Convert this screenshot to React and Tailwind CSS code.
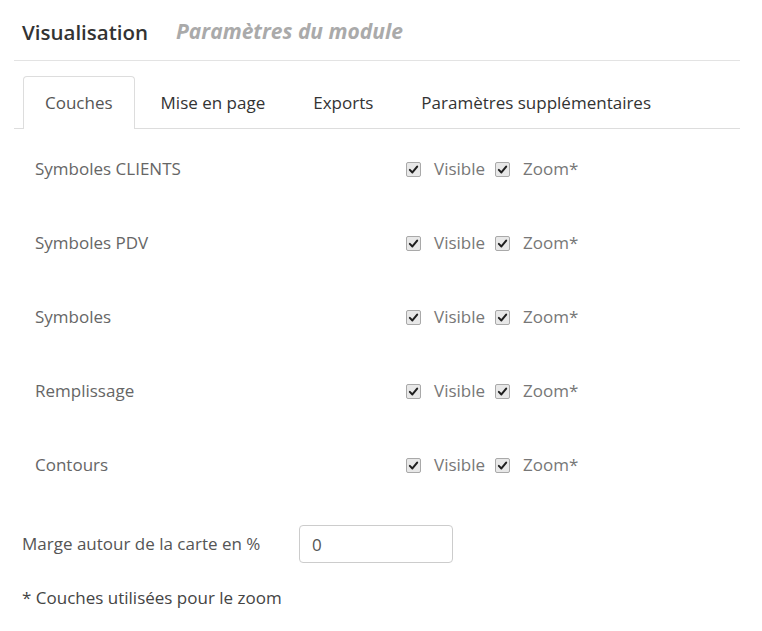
import React from "react";

const layers = ["Symboles CLIENTS", "Symboles PDV", "Symboles", "Remplissage", "Contours"];
const tabs = ["Couches", "Mise en page", "Exports", "Paramètres supplémentaires"];

function Check({ label }) {
  return (
    <label className="flex items-center gap-[13px]">
      <span className="flex h-[15px] w-[15px] items-center justify-center rounded-[2px] border border-[#a9a9a9] bg-[#e8e8e8]">
        <svg viewBox="0 0 12 12" className="h-[11px] w-[11px]">
          <path d="M2 6.4 L4.8 9.2 L10 2.8" fill="none" stroke="#1f1f1f" strokeWidth="2.2" strokeLinecap="round" strokeLinejoin="round" />
        </svg>
      </span>
      <span className="text-[#777]">{label}</span>
    </label>
  );
}

export default function App() {
  return (
    <div className="min-h-[631px] w-[762px] bg-white text-[17px] font-['Open_Sans',sans-serif]">
      <div className="ml-[14px] w-[726px]">
        {/* header */}
        <div className="flex h-[61px] items-center gap-[28px] border-b border-[#e3e3e3] pl-[8px] pt-[4px]">
          <span className="text-[20.5px] font-semibold text-[#333]">Visualisation</span>
          <span className="text-[21px] font-bold italic text-[#aaa]">Paramètres du module</span>
        </div>

        {/* tabs */}
        <ul className="mt-[15px] flex h-[53px] border-b border-[#ddd] pl-[9px]">
          {tabs.map((t, i) => (
            <li
              key={t}
              className={`-mb-px mr-[4px] flex items-center pl-[21px] pr-[21px] ${
                i === 0
                  ? "rounded-t-[4px] border border-b-0 border-[#ddd] bg-white text-[#555]"
                  : "border border-transparent text-[#333]"
              }`}
            >
              {t}
            </li>
          ))}
        </ul>

        {/* layers */}
        <div className="pt-[3px]">
          {layers.map((l) => (
            <div key={l} className="flex h-[74px] items-center pl-[21px]">
              <span className="w-[371px] text-[#666]">{l}</span>
              <div className="flex items-center gap-[10px]">
                <Check label="Visible" />
                <Check label="Zoom*" />
              </div>
            </div>
          ))}
        </div>

        {/* marge */}
        <div className="mt-[23px] flex items-center pl-[8px]">
          <span className="w-[277px] text-[#555]">Marge autour de la carte en %</span>
          <input
            defaultValue="0"
            className="h-[38px] w-[154px] rounded-[4px] border border-[#ccc] px-[12px] text-[#555] outline-none"
          />
        </div>

        <p className="mt-[22px] pl-[8px] text-[#444]">* Couches utilisées pour le zoom</p>
      </div>
    </div>
  );
}
